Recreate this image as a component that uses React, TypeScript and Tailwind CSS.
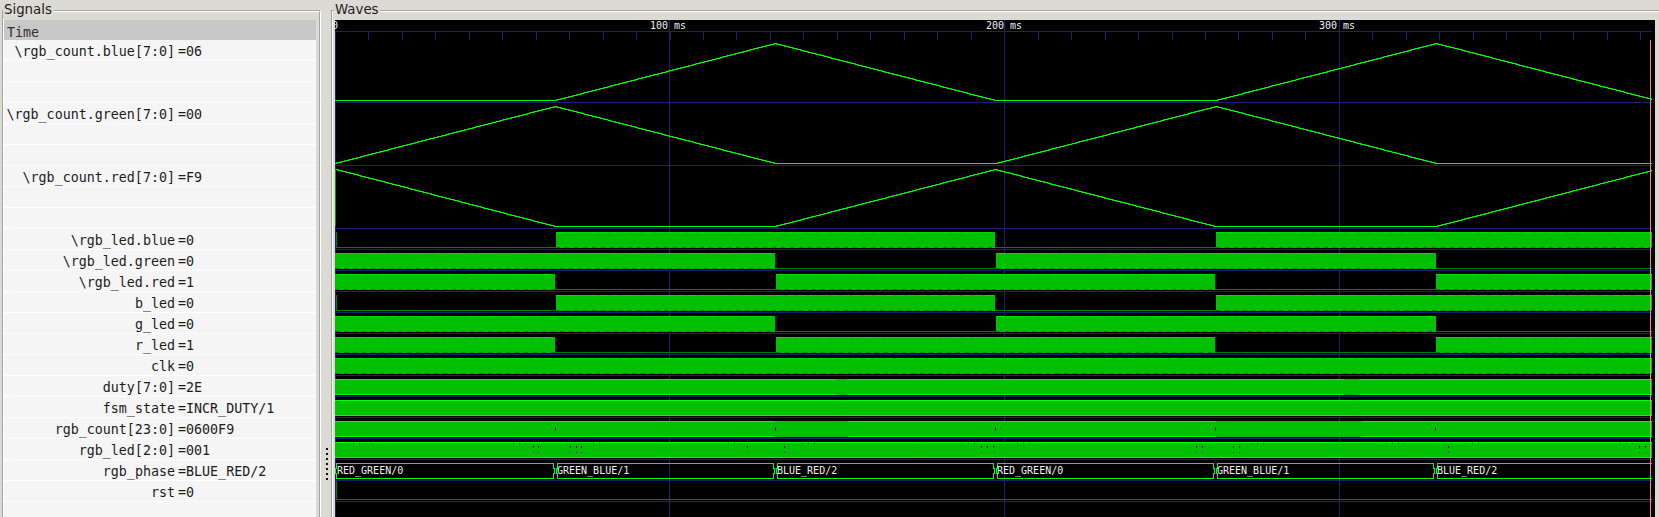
import React from 'react';

const mono = 'font-["DejaVu_Sans_Mono",monospace]';

const signals: [string, string][] = [
  ['\\rgb_count.blue[7:0]', '=06'],
  ['', ''],
  ['', ''],
  ['\\rgb_count.green[7:0]', '=00'],
  ['', ''],
  ['', ''],
  ['\\rgb_count.red[7:0]', '=F9'],
  ['', ''],
  ['', ''],
  ['\\rgb_led.blue', '=0'],
  ['\\rgb_led.green', '=0'],
  ['\\rgb_led.red', '=1'],
  ['b_led', '=0'],
  ['g_led', '=0'],
  ['r_led', '=1'],
  ['clk', '=0'],
  ['duty[7:0]', '=2E'],
  ['fsm_state', '=INCR_DUTY/1'],
  ['rgb_count[23:0]', '=0600F9'],
  ['rgb_led[2:0]', '=001'],
  ['rgb_phase', '=BLUE_RED/2'],
  ['rst', '=0'],
  ['', ''],
];

const RIGHT = 1652;
const LOW = '#008000';
const HIGH = '#00ff00';
const FILL = '#00c000';
const GRID = '#202070';

// row bottoms of the 1-bit and bus traces
const gridLines = [102, 165, 228, 249, 270, 291, 312, 333, 354, 375, 396, 417, 438, 459, 480, 501];

const PHASES = [555, 775, 995, 1215, 1435];
const blueRuns: [number, number][] = [[556, 995], [1216, 1652]];
const greenRuns: [number, number][] = [[335, 775], [996, 1436]];
const redRuns: [number, number][] = [[335, 555], [776, 1215], [1436, 1652]];
const ledRows: [number, [number, number][]][] = [
  [249, blueRuns],
  [270, greenRuns],
  [291, redRuns],
  [312, blueRuns],
  [333, greenRuns],
  [354, redRuns],
];

// solid bright edges, with the gaps where the bus toggles too fast to draw
const busRows: [number, [number, number][]][] = [
  [396, [[335, 837], [847, 1344], [1359, RIGHT]]],
  [417, [[335, 845], [846, 1355], [1356, RIGHT]]],
  [438, [[335, 774], [848, 1216], [1362, RIGHT]]],
  [459, [[335, 922], [923, RIGHT]]],
];

const topDots = [353, 359, 365, 371, 513, 519, 525, 587, 593, 599, 728, 734, 740, 802, 808, 814, 962, 968, 974, 1017, 1023, 1029, 1251, 1257, 1263, 1386, 1392, 1398, 1404, 1466, 1472, 1478, 1620, 1626, 1632];
const midDots = [533, 538, 570, 576, 581, 747, 784, 981, 987, 993, 1196, 1202, 1233, 1239, 1448, 1639, 1645];

const phaseLabels = ['RED_GREEN/0', 'GREEN_BLUE/1', 'BLUE_RED/2', 'RED_GREEN/0', 'GREEN_BLUE/1', 'BLUE_RED/2'];

// staircase like gtkwave draws an analog trace: 1px steps through the given corners
function stairs(points: [number, number][]) {
  let d = `M${points[0][0]} ${points[0][1] + 0.5}`;
  for (let i = 1; i < points.length; i++) {
    const [x0, y0] = points[i - 1];
    const [x1, y1] = points[i];
    for (let x = x0 + 1; x <= x1; x++) {
      const y = Math.round(y0 + ((y1 - y0) * (x - x0)) / (x1 - x0));
      d += `H${x}V${y + 0.5}`;
    }
  }
  return d;
}

const hLine = (x0: number, x1: number, y: number, color: string, dash?: string, key?: React.Key) => (
  <line key={key} x1={x0} x2={x1} y1={y + 0.5} y2={y + 0.5} stroke={color} strokeDasharray={dash} />
);

const Waves = () => {
  const ticks = Array.from({ length: 40 }, (_, i) => Math.round(334.8 + i * 33.47));
  const phaseEdges = [335, ...PHASES, RIGHT + 4];

  return (
    <svg width={1320} height={497} viewBox="335 20 1320 497" shapeRendering="crispEdges" className="block bg-black">
      {/* ruler and grid */}
      {hLine(335, RIGHT, 31, GRID)}
      {ticks.map(x => (
        <line key={x} x1={x + 0.5} x2={x + 0.5} y1={31} y2={40} stroke={GRID} />
      ))}
      {[335, 669, 1004, 1339].map(x => (
        <line key={x} x1={x + 0.5} x2={x + 0.5} y1={x === 335 ? 31 : 20} y2={517} stroke={GRID} />
      ))}
      {gridLines.map(y => hLine(335, RIGHT, y, GRID, undefined, y))}

      {/* time labels */}
      <g fontFamily="'DejaVu Sans Mono', monospace" fontSize={10} fill="#f0f0f0" shapeRendering="auto">
        <text x={332} y={29}>0</text>
        <text x={650} y={29}>100 ms</text>
        <text x={986} y={29}>200 ms</text>
        <text x={1319} y={29}>300 ms</text>
      </g>

      {/* analog traces */}
      <g fill="none" stroke={HIGH} strokeWidth={1.15} shapeRendering="auto">
        <path d={stairs([[335, 100], [555, 100], [775, 43], [995, 100], [1216, 100], [1436, 43], [RIGHT, 99]])} />
        <path d={stairs([[335, 163], [555, 106], [775, 163], [996, 163], [1216, 106], [1436, 163], [RIGHT, 163]])} />
        <path d={stairs([[336, 169], [555, 226], [775, 226], [995, 169], [1215, 226], [1436, 226], [RIGHT, 170]])} />
      </g>
      <line x1={335.5} x2={335.5} y1={169} y2={226} stroke="#00a000" />

      {/* led rows */}
      {ledRows.map(([bottom, runs]) => (
        <g key={bottom}>
          {hLine(336, RIGHT, bottom - 2, LOW)}
          {runs[0][0] !== 335 && (
            <line x1={336.5} x2={336.5} y1={bottom - 17} y2={bottom - 2} stroke={LOW} />
          )}
          {runs.map(([a, b]) => (
            <g key={a}>
              <rect x={a} y={bottom - 17} width={b - a} height={16} fill={FILL} />
              {hLine(a, b, bottom - 17, '#00e000', '8 3')}
              {hLine(a, b, bottom - 2, LOW, '4 5')}
            </g>
          ))}
        </g>
      ))}

      {/* clk */}
      <rect x={335} y={358} width={RIGHT - 335} height={16} fill={FILL} />
      {hLine(335, RIGHT, 358, '#00e000', '8 3')}
      {hLine(335, RIGHT, 373, LOW, '4 5')}

      {/* buses */}
      {busRows.map(([bottom, runs]) => (
        <g key={bottom}>
          <rect x={335} y={bottom - 17} width={RIGHT - 335} height={16} fill={FILL} />
          {runs.map(([a, b]) => (
            <g key={a}>
              {hLine(a, b, bottom - 17, HIGH)}
              {hLine(a, b, bottom - 2, HIGH)}
            </g>
          ))}
        </g>
      ))}
      {PHASES.map(x => (
        <rect key={x} x={x} y={427} width={1} height={4} fill="#000" />
      ))}
      <g fill="#000">
        {topDots.map(x => (
          <rect key={x} x={x} y={443} width={1} height={1} />
        ))}
        {midDots.map(x => (
          <g key={x}>
            <rect x={x} y={446} width={1} height={2} />
            <rect x={x} y={452} width={1} height={1} />
          </g>
        ))}
      </g>

      {/* rgb_phase */}
      {phaseEdges.slice(0, -1).map((a, i) => {
        const b = phaseEdges[i + 1];
        const left = i === 0 ? 336 : a + 2;
        const right = i === 5 ? RIGHT : b - 1;
        return (
          <g key={a} fill="none" stroke={HIGH}>
            {hLine(left, right, 463, HIGH)}
            {hLine(left, right, 478, HIGH)}
            <path d={`M${left + 0.5} 463V468H${left - 0.5}V473H${left + 0.5}V479`} />
            {i < 5 && <path d={`M${right - 0.5} 463V468H${right + 0.5}V473H${right - 0.5}V479`} />}
          </g>
        );
      })}
      <g fontFamily="'DejaVu Sans Mono', monospace" fontSize={10} fill="#f0f0f0" shapeRendering="auto">
        {phaseLabels.map((label, i) => (
          <text key={i} x={i === 0 ? 337 : PHASES[i - 1] + 2} y={474}>
            {label}
          </text>
        ))}
      </g>

      {/* rst */}
      <line x1={336.5} x2={336.5} y1={481} y2={499} stroke={LOW} />
      {hLine(336, RIGHT, 499, LOW)}

      {/* cursor */}
      <line x1={1650.5} x2={1650.5} y1={40} y2={517} stroke="#ff8080" />
    </svg>
  );
};

const App: React.FC = () => {
  return (
    <div className="flex h-[517px] w-[1659px] overflow-hidden bg-[#dcdad5] text-[#1c1c1c]">
      {/* Signals */}
      <div className="relative ml-[2px] mt-[10px] w-[319px] shrink-0 border-l border-r border-t border-l-[#a5a39d] border-r-white border-t-[#a5a39d]">
        <span className='absolute -top-[10px] left-0 bg-[#dcdad5] px-[1px] font-["DejaVu_Sans",sans-serif] text-[13.33px] leading-[18px]'>
          Signals
        </span>
        <div className="h-full border-l border-r border-t border-l-white border-r-[#a5a39d] border-t-white pr-[3px] pt-[8px]">
          <div className={`${mono} text-[13.33px] bg-[#f5f5f5]`}>
            <div className="h-[20px] bg-[#c8c8c8] pl-[3px] leading-[25px] text-[#333]">Time</div>
            {signals.map(([name, value], i) => (
              <div key={i} className="flex h-[21px] border-b border-white leading-[24px] whitespace-pre">
                <span className="w-[171px] text-right">{name}</span>
                <span className="ml-[3px]">{value}</span>
              </div>
            ))}
          </div>
        </div>
      </div>

      {/* pane handle */}
      <div className="flex w-[10px] shrink-0 flex-col items-center gap-[3px] pl-[1px] pt-[448px]">
        {[0, 1, 2, 3, 4, 5, 6].map(i => (
          <div key={i} className="h-[2px] w-[2px] bg-[#111]" />
        ))}
      </div>

      {/* Waves */}
      <div className="relative mt-[10px] min-w-0 flex-1 border-l border-t border-l-[#a5a39d] border-t-[#a5a39d]">
        <span className='absolute -top-[10px] left-[2px] bg-[#dcdad5] px-[1px] font-["DejaVu_Sans",sans-serif] text-[13.33px] leading-[18px]'>
          Waves
        </span>
        <div className="h-full border-l border-t border-l-white border-t-white pl-[2px] pt-[8px]">
          <Waves />
        </div>
      </div>
    </div>
  );
};

export default App;
